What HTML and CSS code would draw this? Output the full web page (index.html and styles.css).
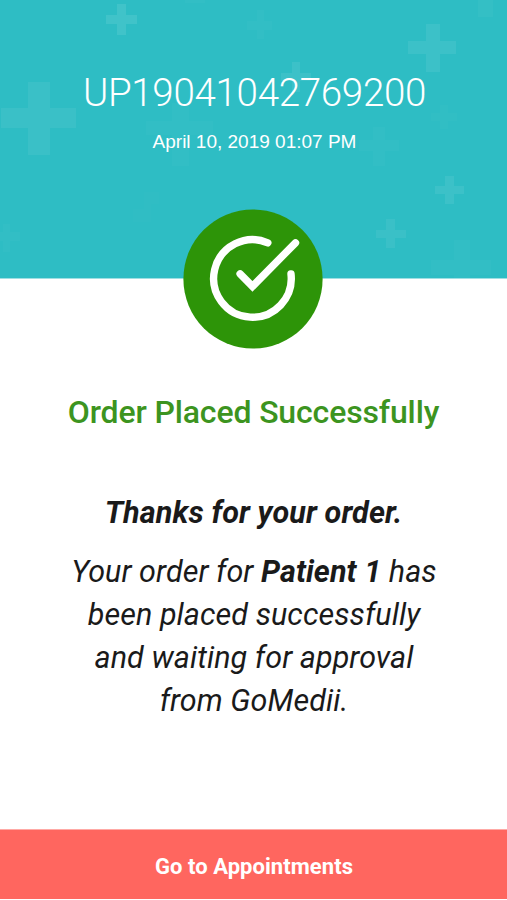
FILE: index.html
```html
<!DOCTYPE html>
<html lang="en">
<head>
    <meta charset="UTF-8">
    <meta name="viewport" content="width=device-width, initial-scale=1.0">
    <title>Order Placed</title>
    <link rel="stylesheet" href="styles.css">
</head>
<body>

<header class="order-header">
    <!-- Decorative crosses behind the header text -->
    <svg class="header-pattern" viewBox="0 0 507 279" aria-hidden="true">
        <path opacity=".09" d="M117 4h9v11h11v9h-11v11h-9V24h-11v-9h11z"/>
        <path opacity=".06" d="M28 82h22v26h26v20H50v27H28v-27H1v-20h27z"/>
        <path opacity=".07" d="M426 24h14v17h16v13h-16v18h-14V54h-18V41h18z"/>
        <path opacity=".07" d="M292 62h8v11h11v8h-11v11h-8V81h-11v-8h11z"/>
        <path opacity=".07" d="M445 176h9v10h10v8h-10v10h-9v-10h-10v-8h10z"/>
        <path opacity=".06" d="M386 219h9v11h11v8h-11v10h-9v-10h-10v-8h10z"/>
        <path opacity=".025" d="M373 127h12v13h14v11h-14v15h-12v-15h-14v-11h14z"/>
        <path opacity=".02" d="M454 240h16v20h21v15h-21v4h-16v-4h-23v-15h23z"/>
        <path opacity=".03" d="M478 0h15v17h-15z"/>
        <path opacity=".02" d="M172 103h17v18h24v14h-24v31h-17v-31h-26v-14h26z"/>
        <path opacity=".02" d="M257 10h7v11h8v9h-8v9h-7v-9h-10v-9h10z"/>
        <path opacity=".015" d="M440 105h8v8h9v8h-9v8h-8v-8h-9v-8h9z"/>
        <path opacity=".02" d="M3 224h7v8h10v9H10v11H3v-11H0v-9h3z"/>
        <path opacity=".025" d="M185 0h20v3h-20z"/>
        <path opacity=".01" d="M144 192h15v12h-8v18h-18v-13h11z"/>
    </svg>
    <div class="order-id">UP19041042769200</div>
    <div class="order-date">April 10, 2019 01:07 PM</div>
</header>

<main class="order-content">
    <svg class="success-icon" viewBox="0 0 140 140" role="img" aria-label="Success">
        <circle class="icon-bg" cx="70" cy="70" r="69.6"/>
        <g class="icon-line">
            <path d="M84.8 33.8A38.8 38.8 0 1 0 108 65"/>
            <path d="M57.1 64.8l12.4 12.6 43-43.6"/>
        </g>
    </svg>

    <h1 class="order-title">Order Placed Successfully</h1>
    <p class="order-thanks">Thanks for your order.</p>
    <p class="order-message">Your order for <strong>Patient 1</strong> has<br>been placed successfully<br>and waiting for approval<br>from GoMedii.</p>
</main>

<button class="appointments-btn">Go to Appointments</button>

</body>
</html>
```
FILE: styles.css
```css
* {
    box-sizing: border-box;
}

body {
    font-family: Roboto, sans-serif;
    background-color: #fff;
    color: #1a1a1a;
    margin: 0;
    height: 900px;
    display: flex;
    flex-direction: column;
    overflow: hidden;
}

/* Header */
.order-header {
    position: relative;
    height: 279px;
    flex: none;
    padding-top: 69px;
    padding-left: 2px;
    background-color: #2ebdc4;
    border-bottom: 1px solid #9fdfe3;
    color: #fff;
    text-align: center;
}

.header-pattern {
    position: absolute;
    top: 0;
    left: 0;
    width: 507px;
    height: 279px;
    fill: #fff;
}

.order-id {
    position: relative;
    font-size: 38.5px;
    font-weight: 300;
    letter-spacing: -0.3px;
    line-height: 48px;
}

.order-date {
    position: relative;
    margin-top: 13px;
    font-family: "Liberation Sans", Arial, sans-serif;
    font-size: 19px;
    line-height: 24px;
}

/* Content */
.order-content {
    position: relative;
    flex: 1;
    display: flex;
    flex-direction: column;
    align-items: center;
    text-align: center;
}

.success-icon {
    width: 140px;
    height: 140px;
    margin-top: -70px;
    margin-right: 2px;
}

.icon-bg {
    fill: #2d9408;
}

.icon-line {
    fill: none;
    stroke: #fff;
    stroke-width: 7.4;
    stroke-linecap: round;
}

.order-title {
    margin: 43px 0 0;
    color: #3c9420;
    font-size: 32px;
    font-weight: 500;
    letter-spacing: -0.14px;
    line-height: 40px;
}

.order-thanks {
    margin: 61px 0 0;
    font-size: 30.6px;
    font-style: italic;
    font-weight: 700;
    letter-spacing: 0.1px;
    line-height: 40px;
}

.order-message {
    margin: 17px 0 0;
    padding-left: 1px;
    font-size: 30.5px;
    font-style: italic;
    letter-spacing: 0.07px;
    line-height: 43px;
}

/* Bottom Button */
.appointments-btn {
    height: 70px;
    flex: none;
    margin-bottom: 1px;
    padding: 4px 0 0 1px;
    border: none;
    border-top: 1px solid #ffaaa6;
    background-color: #ff665f;
    color: #fff;
    font-family: inherit;
    font-size: 22px;
    font-weight: 700;
    letter-spacing: 0.05px;
}
```
